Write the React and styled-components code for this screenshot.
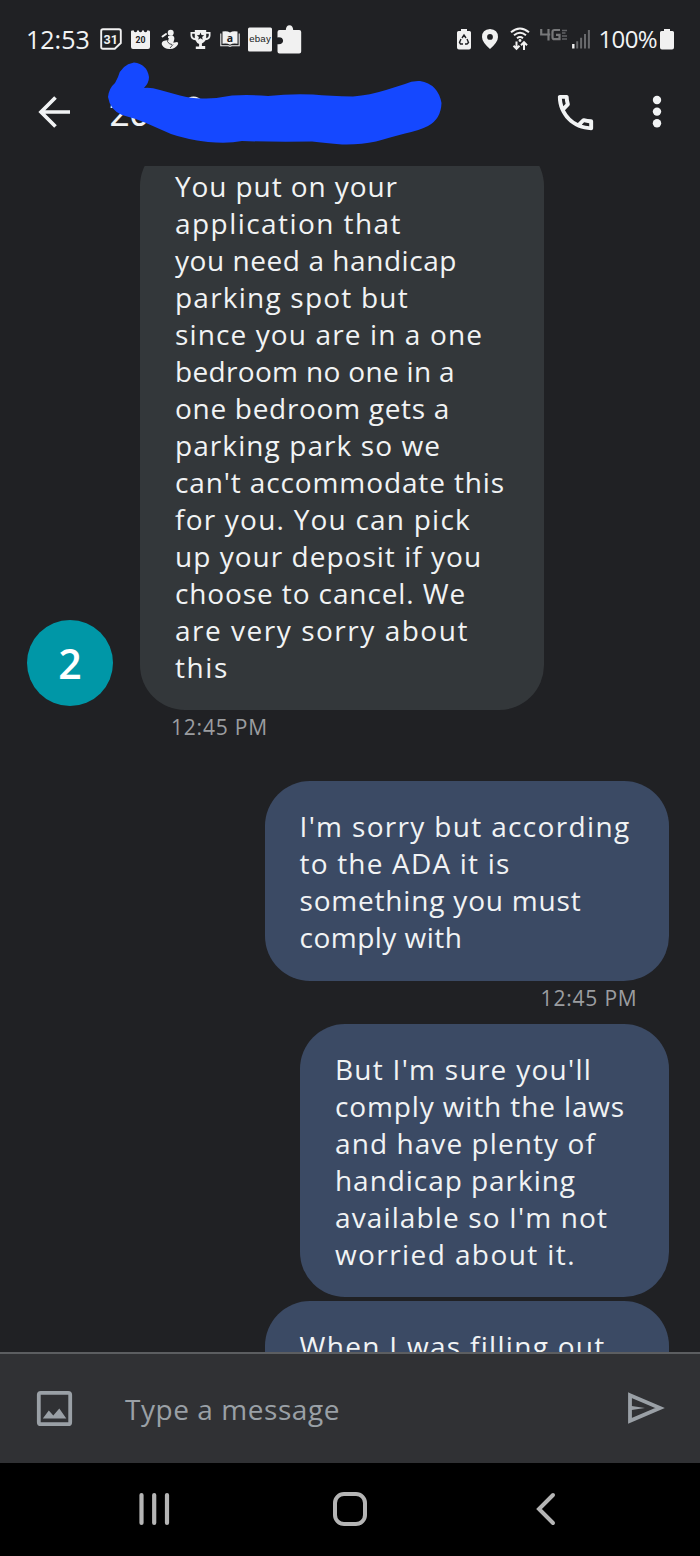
import React from 'react';
import styled, { createGlobalStyle } from 'styled-components';
import { MdOutlineCall } from 'react-icons/md';

const GlobalStyle = createGlobalStyle`
  * { box-sizing: border-box; }
  body { margin: 0; background: #202124; }
`;

const Screen = styled.div`
  display: flex;
  flex-direction: column;
  width: 700px;
  height: 1556px;
  overflow: hidden;
  background: #202124;
  color: #f1f3f4;
  font-family: 'Open Sans', 'Noto Sans', sans-serif;
`;

const Glyph = styled.svg`
  display: block;
  flex: none;
  width: ${(p) => p.$w}px;
  height: ${(p) => p.$h}px;
  margin-left: ${(p) => p.$gap || 0}px;
`;

/* Status bar */
const StatusBar = styled.div`
  display: flex;
  justify-content: space-between;
  align-items: center;
  height: 78px;
  padding: 0 26px 0 26px;
`;

const StatusGroup = styled.div`
  display: flex;
  align-items: center;
`;

const StatusText = styled.span`
  width: ${(p) => p.$w}px;
  margin-left: ${(p) => p.$gap || 0}px;
  font-size: ${(p) => p.$size}px;
  letter-spacing: ${(p) => p.$track}px;
  line-height: 30px;
  white-space: nowrap;
`;

/* App header */
const Header = styled.header`
  position: relative;
  display: flex;
  align-items: center;
  height: 88px;
  padding: 0 38px 20px 38px;
`;

const Title = styled.h1`
  flex: 1;
  margin: 3px 0 0 38px;
  font: 400 36px/44px Roboto, sans-serif;
`;

const CallIcon = styled(MdOutlineCall)`
  flex: none;
  width: 47px;
  height: 47px;
  color: #f1f3f4;
`;

const Redaction = styled.svg`
  position: absolute;
  left: 100px;
  top: -23px;
  width: 350px;
  height: 100px;
`;

/* Conversation */
const Thread = styled.main`
  flex: none;
  height: 1186px;
  overflow: hidden;
  padding: 0 31.5px 0 27px;
`;

const MessageRow = styled.div`
  display: flex;
  align-items: flex-end;
  justify-content: ${(p) => (p.$sent ? 'flex-end' : 'flex-start')};
  gap: 27px;
  margin-top: ${(p) => p.$gap || 0}px;
`;

const Avatar = styled.div`
  display: flex;
  align-items: center;
  justify-content: center;
  flex: none;
  width: 86px;
  height: 86px;
  margin-bottom: 4px;
  border-radius: 50%;
  background: #0097a7;
  color: #fff;
  font-size: 41px;
  font-weight: 600;
  line-height: 86px;
`;

const Bubble = styled.div`
  flex: none;
  width: ${(p) => p.$w}px;
  padding: 27px 0 24.5px 35px;
  border-radius: 45px;
  background: ${(p) => (p.$sent ? '#3b4a64' : '#33373a')};
`;

const ContinuedBubble = styled(Bubble)`
  height: 110px;
`;

const Line = styled.span`
  display: block;
  font-size: 28px;
  line-height: 37px;
  letter-spacing: ${(p) => p.$track}px;
  white-space: nowrap;
`;

const Timestamp = styled.div`
  height: 34px;
  padding: 0 31px 0 144px;
  font-size: 21px;
  line-height: 34px;
  letter-spacing: 0.8px;
  color: #9b9da0;
  text-align: ${(p) => (p.$sent ? 'right' : 'left')};
`;

/* Composer */
const Composer = styled.div`
  display: flex;
  align-items: center;
  flex: none;
  height: 111px;
  padding: 0 35px 1px 36px;
  border-top: 2px solid #5c5e61;
  background: #303134;
`;

const Placeholder = styled.span`
  flex: 1;
  margin: 2px 0 0 52px;
  font-size: 28px;
  letter-spacing: 0.55px;
  color: #9aa0a6;
`;

/* System navigation */
const NavBar = styled.nav`
  display: flex;
  align-items: center;
  flex: none;
  height: 93px;
  padding: 0 0 1px 138px;
  background: #000;
`;

const received = [
  ['You put on your', 0.91],
  ['application that', 1.44],
  ['you need a handicap', 0.56],
  ['parking spot but', 1.22],
  ['since you are in a one', 1.12],
  ['bedroom no one in a', 0.33],
  ['one bedroom gets a', 0.7],
  ['parking park so we', 1.08],
  ["can't accommodate this", 0.88],
  ['for you. You can pick', 1.22],
  ['up your deposit if you', 1.02],
  ['choose to cancel. We', 0.89],
  ['are very sorry about', 1.52],
  ['this', 1.6],
];

const firstReply = [
  ["I'm sorry but according", 1.33],
  ['to the ADA it is', 1.19],
  ['something you must', 0.81],
  ['comply with', 0.49],
];

const secondReply = [
  ["But I'm sure you'll", 1.27],
  ['comply with the laws', 0.87],
  ['and have plenty of', 1.08],
  ['handicap parking', 0.95],
  ["available so I'm not", 1.12],
  ['worried about it.', 1.41],
];

const thirdReply = [
  ['When I was filling out', 1.3],
];

const Message = ({ lines, width, sent, as: Shell = Bubble }) => (
  <Shell $w={width} $sent={sent}>
    {lines.map(([text, track]) => (
      <Line key={text} $track={track}>{text}</Line>
    ))}
  </Shell>
);

const ink = '#f1f1f1';
const dark = '#202124';

const NotificationIcons = () => (
  <>
    <Glyph $w={22} $h={30} $gap={11} viewBox="0 0 22 30">
      <path d="M3 5.2h16q1.8 0 1.8 1.8v12l-6 5.8H3Q1.2 24.8 1.2 23V7Q1.2 5.2 3 5.2z" fill="none" stroke={ink} strokeWidth="1.9" />
      <text x="10.7" y="19.5" fill={ink} fontFamily="Roboto, sans-serif" fontWeight="700" fontSize="12.5" textAnchor="middle">31</text>
    </Glyph>
    <Glyph $w={19} $h={30} $gap={9} viewBox="0 0 19 30">
      <path d="M1 6.5h2v1q1.5 1.500 3 0v-1h2v1q1.500 1.500 3 0v-1h2v1q1.500 1.500 3 0v-1h2Q19 6.500 19 8v15q0 2-2 2H2q-2 0-2-2V7.500Q0 6.500 1 6.500z" fill={ink} />
      <text x="9.5" y="19.3" fill={dark} fontFamily="Roboto, sans-serif" fontWeight="700" fontSize="8.7" textAnchor="middle">20</text>
    </Glyph>
    <Glyph $w={18} $h={30} $gap={11} viewBox="0 0 18 30">
      <circle cx="9.7" cy="8.8" r="3" fill={ink} />
      <path d="M7 12.300l4-1q2.800 1 2.300 4l-1 3.500 3.700-.8q1.800.500 1 2.200-2.500 4.800-8 4.800-5.500.300-8-4-1-2.500 1.500-4 2.500-1 4.500-.7z" fill={ink} />
      <path d="M1.500 12.500L5 10" stroke={ink} strokeWidth="2" strokeLinecap="round" />
      <path d="M7.500 14l-1 3.500q1.500 3 4.500 3M9 24l3-3.500" fill="none" stroke={dark} strokeWidth=".8" />
    </Glyph>
    <Glyph $w={21} $h={30} $gap={10.5} viewBox="0 0 21 30">
      <path d="M4.8 6h11.4v2h4.3v3.5q0 4-5 4.8-1.3 2.500-3.600 3.100v2.600h3.300V25H5.8v-2.500h3.300v-2.600Q6.700 19.200 5.500 16.300.5 15.500.5 11.500V8h4.300zM2.200 9.800v1.700q0 2 2.600 2.700V9.800zm16.600 0h-2.600v4.400q2.600-.7 2.600-2.700z" fill={ink} fillRule="evenodd" />
      <path d="M10.500 8.500l1 2.600 2.700.2-2.100 1.700.7 2.700-2.300-1.500-2.300 1.500.7-2.700-2.100-1.700 2.700-.2z" fill={dark} />
    </Glyph>
    <Glyph $w={20} $h={30} $gap={9} viewBox="0 0 20 30">
      <path d="M2.500 7.500q4.500-1 7.500 1 3-2 7.500-1v12.300q-4.500-.9-7.500 1-3-1.900-7.500-1z" fill={ink} />
      <path d="M.8 9.500v12.300h7.700q1.500 1 3 0h7.700V9.500" fill="none" stroke={ink} strokeWidth="1.1" />
      <text x="10" y="17.5" fill={dark} fontFamily="'Open Sans', sans-serif" fontWeight="700" fontSize="10.5" textAnchor="middle">a</text>
    </Glyph>
    <Glyph $w={24} $h={30} $gap={8} viewBox="0 0 24 30">
      <rect y="3.5" width="24" height="24" rx="1.5" fill={ink} />
      <text x="12" y="17.500" fill={dark} fontFamily="'Liberation Sans', sans-serif" fontSize="9.7" textLength="21.5" textAnchor="middle">ebay</text>
    </Glyph>
    <Glyph $w={25} $h={30} $gap={5.5} viewBox="0 0 25 30">
      <path d="M2.500 6h6.300q.3-4.800 3.700-4.800T16.200 6h6q2 0 2 2v19.500q0 2-2 2H2.500q-2 0-2-2v-7.300q5.300.6 5.600-3.400-.300-4-5.600-3.400V8q0-2 2-2z" fill={ink} />
    </Glyph>
  </>
);

const SystemIcons = () => (
  <>
    <Glyph $w={14} $h={30} viewBox="0 0 14 30">
      <path d="M4 5h6v2h2.500Q14 7 14 8.500v15q0 2-2 2H2q-2 0-2-2v-15Q0 7 1.500 7H4z" fill={ink} />
      <path d="M5 14l2-3 2 3M10 15l1.500 3.500-1.500 1.500H8M6 20H3.500l-1-1.500L4 15" fill="none" stroke={dark} strokeWidth="1.4" />
    </Glyph>
    <Glyph $w={16} $h={30} $gap={11} viewBox="0 0 16 30">
      <path d="M8 5q8 .5 8 8 0 5-8 12Q0 18 0 13q0-7.500 8-8zm0 5a2.900 2.900 0 1 0 0 5.800A2.900 2.900 0 1 0 8 10z" fill={ink} fillRule="evenodd" />
    </Glyph>
    <Glyph $w={20} $h={30} $gap={12} viewBox="0 0 20 30">
      <path d="M1 8.300Q10 .7 19 8.300M4 11.300q6-5 12 0M7 14.200q3-2.300 6 0" fill="none" stroke={ink} strokeWidth="2" />
      <circle cx="10" cy="16.500" r="1.400" fill={ink} />
      <path d="M6.500 17.500v7M3.500 21.800l3 3 3-3M14 26v-7.500M11 21.200l3-3 3 3" fill="none" stroke={ink} strokeWidth="2" />
    </Glyph>
    <Glyph $w={27} $h={30} $gap={10} viewBox="0 0 27 30">
      <path d="M1.200 5v5.500h9M8.500 5v11.500M20 6h-5.500q-2 0-2 2v5.200q0 2 2 2h5v-4.300H16" fill="none" stroke="#77787a" strokeWidth="2.200" />
      <path d="M22 6.500h5M22 9h3.500M22 12h5M22 15h5" stroke="#626366" strokeWidth="1.300" />
    </Glyph>
    <Glyph $w={18} $h={30} $gap={5} viewBox="0 0 18 30">
      <path d="M1.300 24.500V20" stroke={ink} strokeWidth="2.400" />
      <path d="M5.200 24.500V17.200M9.100 24.500v-10.800M13 24.500V10M16.900 24.500V6" stroke="#68696c" strokeWidth="2" />
    </Glyph>
  </>
);

export default function App() {
  return (
    <Screen>
      <GlobalStyle />
      <StatusBar>
        <StatusGroup>
          <StatusText $w={63} $size={25} $track={0}>12:53</StatusText>
          <NotificationIcons />
        </StatusGroup>
        <StatusGroup>
          <SystemIcons />
          <StatusText $w={59} $gap={8.5} $size={24} $track={-0.6}>100%</StatusText>
          <Glyph $w={14} $h={30} $gap={2.5} viewBox="0 0 14 30">
            <path d="M4 5h6v2h2.500Q14 7 14 8.500v15q0 2-2 2H2q-2 0-2-2v-15Q0 7 1.500 7H4z" fill={ink} />
          </Glyph>
        </StatusGroup>
      </StatusBar>

      <Header>
        <Glyph $w={33} $h={36} viewBox="0 0 33 36">
          <path d="M32 18H4M17.500 3.500L3 18l14.500 14.500" fill="none" stroke="#f1f3f4" strokeWidth="3.700" />
        </Glyph>
        <Title>20</Title>
        <Redaction viewBox="100 55 350 100">
          <path d="M186 103q7-9 16 0" fill="none" stroke="#f1f3f4" strokeWidth="4" />
          <path d="M118 77Q121 65 134 62.500Q147 64 149 77Q149 83 144 88Q150 87 160 90L180 95.500Q192 99 206 98.500Q220 98 232 95.500Q250 94.500 268 96Q290 93.500 313 94.500Q330 96 353 96.500Q370 95 386 90L405 84Q412 80.500 420 81Q438 84 441.500 103Q441 119 428 126Q418 131 405 133.500Q388 138 376 141.500Q360 145 342 144.500Q325 143 312 141.500Q270 142 242 141Q228 144 208 142Q185 139 171 134L146 123Q134 118 122 115Q110 110 108 97Q109 88 115 83Z" fill="#1548ff" />
        </Redaction>
        <CallIcon />
        <Glyph $w={10} $h={36} $gap={53} viewBox="0 0 10 36">
          <circle cx="5" cy="6" r="4.200" fill="#f1f3f4" />
          <circle cx="5" cy="17.600" r="4.200" fill="#f1f3f4" />
          <circle cx="5" cy="29.200" r="4.200" fill="#f1f3f4" />
        </Glyph>
      </Header>

      <Thread>
        <MessageRow $gap={-25.5}>
          <Avatar>2</Avatar>
          <Message lines={received} width={404} />
        </MessageRow>
        <Timestamp>12:45 PM</Timestamp>
        <MessageRow $sent $gap={37}>
          <Message lines={firstReply} width={404} sent />
        </MessageRow>
        <Timestamp $sent>12:45 PM</Timestamp>
        <MessageRow $sent $gap={9}>
          <Message lines={secondReply} width={368.5} sent />
        </MessageRow>
        <MessageRow $sent $gap={3.5}>
          <Message as={ContinuedBubble} lines={thirdReply} width={404} sent />
        </MessageRow>
      </Thread>

      <Composer>
        <Glyph $w={37} $h={37} viewBox="0 0 37 37">
          <rect x="2.800" y="2.800" width="31.400" height="31.400" rx="2" fill="none" stroke="#9aa0a6" strokeWidth="3.800" />
          <path d="M6.800 28.500l6-8 4.500 5 6-7 7 10z" fill="#9aa0a6" />
        </Glyph>
        <Placeholder>Type a message</Placeholder>
        <Glyph $w={38} $h={32} viewBox="0 0 38 32">
          <path d="M3 3.200L33 16 3 28.800z" fill="none" stroke="#9aa0a6" strokeWidth="3.800" />
          <path d="M3 13.800l15 2.200-15 2.200z" fill="#9aa0a6" />
        </Glyph>
      </Composer>

      <NavBar>
        <Glyph $w={32} $h={34} viewBox="0 0 32 34">
          <path d="M3.500 3v28M16.200 3v28M29 3v28" stroke="#b5b5b5" strokeWidth="4.200" strokeLinecap="round" />
        </Glyph>
        <Glyph $w={34} $h={34} $gap={163} viewBox="0 0 34 34">
          <rect x="2" y="2" width="30" height="30" rx="9" fill="none" stroke="#b5b5b5" strokeWidth="4" />
        </Glyph>
        <Glyph $w={20} $h={34} $gap={169} viewBox="0 0 20 34">
          <path d="M17 3L3 17l14 14" fill="none" stroke="#b5b5b5" strokeWidth="4" strokeLinecap="round" />
        </Glyph>
      </NavBar>
    </Screen>
  );
}
